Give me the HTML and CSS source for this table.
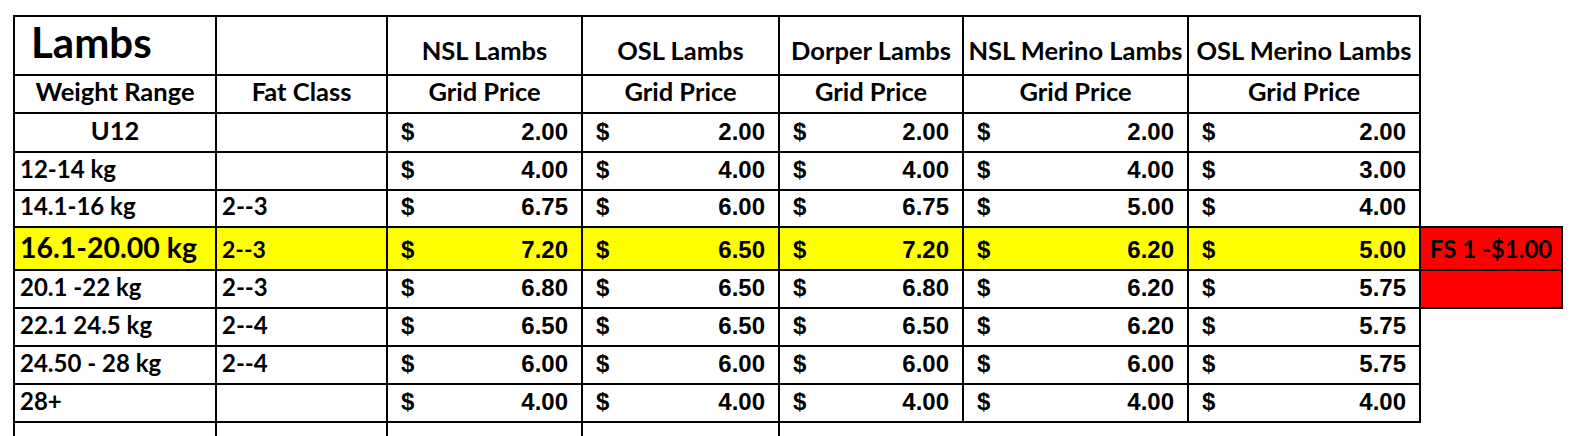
FILE: index.html
```html
<!DOCTYPE html>
<html>
<head>
<meta charset="utf-8">
<title>Lambs Grid Price</title>
<link rel="stylesheet" href="styles.css">
</head>
<body>
<div class="sheet">
  <div class="row head">
    <div class="cell title">Lambs</div>
    <div class="cell"></div>
    <div class="cell hd">NSL Lambs</div>
    <div class="cell hd">OSL Lambs</div>
    <div class="cell hd">Dorper Lambs</div>
    <div class="cell hd">NSL Merino Lambs</div>
    <div class="cell hd">OSL Merino Lambs</div>
    <div class="void"></div>
  </div>
  <div class="row">
    <div class="cell hd">Weight Range</div>
    <div class="cell hd">Fat Class</div>
    <div class="cell hd">Grid Price</div>
    <div class="cell hd">Grid Price</div>
    <div class="cell hd">Grid Price</div>
    <div class="cell hd">Grid Price</div>
    <div class="cell hd">Grid Price</div>
    <div class="void"></div>
  </div>
  <div class="row">
    <div class="cell hd">U12</div>
    <div class="cell"></div>
    <div class="cell price"><span>$</span><span>2.00</span></div>
    <div class="cell price"><span>$</span><span>2.00</span></div>
    <div class="cell price"><span>$</span><span>2.00</span></div>
    <div class="cell price"><span>$</span><span>2.00</span></div>
    <div class="cell price"><span>$</span><span>2.00</span></div>
    <div class="void"></div>
  </div>
  <div class="row">
    <div class="cell">12-14 kg</div>
    <div class="cell"></div>
    <div class="cell price"><span>$</span><span>4.00</span></div>
    <div class="cell price"><span>$</span><span>4.00</span></div>
    <div class="cell price"><span>$</span><span>4.00</span></div>
    <div class="cell price"><span>$</span><span>4.00</span></div>
    <div class="cell price"><span>$</span><span>3.00</span></div>
    <div class="void"></div>
  </div>
  <div class="row">
    <div class="cell">14.1-16 kg</div>
    <div class="cell">2--3</div>
    <div class="cell price"><span>$</span><span>6.75</span></div>
    <div class="cell price"><span>$</span><span>6.00</span></div>
    <div class="cell price"><span>$</span><span>6.75</span></div>
    <div class="cell price"><span>$</span><span>5.00</span></div>
    <div class="cell price"><span>$</span><span>4.00</span></div>
    <div class="void cap"></div>
  </div>
  <div class="row hi">
    <div class="cell big">16.1-20.00 kg</div>
    <div class="cell">2--3</div>
    <div class="cell price"><span>$</span><span>7.20</span></div>
    <div class="cell price"><span>$</span><span>6.50</span></div>
    <div class="cell price"><span>$</span><span>7.20</span></div>
    <div class="cell price"><span>$</span><span>6.20</span></div>
    <div class="cell price"><span>$</span><span>5.00</span></div>
    <div class="cell note">FS 1 -$1.00</div>
  </div>
  <div class="row">
    <div class="cell">20.1 -22 kg</div>
    <div class="cell">2--3</div>
    <div class="cell price"><span>$</span><span>6.80</span></div>
    <div class="cell price"><span>$</span><span>6.50</span></div>
    <div class="cell price"><span>$</span><span>6.80</span></div>
    <div class="cell price"><span>$</span><span>6.20</span></div>
    <div class="cell price"><span>$</span><span>5.75</span></div>
    <div class="cell note"></div>
  </div>
  <div class="row">
    <div class="cell">22.1 24.5 kg</div>
    <div class="cell">2--4</div>
    <div class="cell price"><span>$</span><span>6.50</span></div>
    <div class="cell price"><span>$</span><span>6.50</span></div>
    <div class="cell price"><span>$</span><span>6.50</span></div>
    <div class="cell price"><span>$</span><span>6.20</span></div>
    <div class="cell price"><span>$</span><span>5.75</span></div>
    <div class="void"></div>
  </div>
  <div class="row">
    <div class="cell">24.50 - 28 kg</div>
    <div class="cell">2--4</div>
    <div class="cell price"><span>$</span><span>6.00</span></div>
    <div class="cell price"><span>$</span><span>6.00</span></div>
    <div class="cell price"><span>$</span><span>6.00</span></div>
    <div class="cell price"><span>$</span><span>6.00</span></div>
    <div class="cell price"><span>$</span><span>5.75</span></div>
    <div class="void"></div>
  </div>
  <div class="row">
    <div class="cell">28+</div>
    <div class="cell"></div>
    <div class="cell price"><span>$</span><span>4.00</span></div>
    <div class="cell price"><span>$</span><span>4.00</span></div>
    <div class="cell price"><span>$</span><span>4.00</span></div>
    <div class="cell price"><span>$</span><span>4.00</span></div>
    <div class="cell price"><span>$</span><span>4.00</span></div>
    <div class="void"></div>
  </div>
  <div class="row tail">
    <div class="cell"></div>
    <div class="cell"></div>
    <div class="cell"></div>
    <div class="cell"></div>
    <div class="void"></div>
    <div class="void"></div>
    <div class="void"></div>
    <div class="void"></div>
  </div>
</div>
</body>
</html>
```
FILE: styles.css
```css
html, body {
  overflow: hidden;
}
body {
  margin: 8px 8px 0;
  background: #fff;
  color: #000;
  font-family: "Lato", "Liberation Sans", sans-serif;
}
.sheet {
  display: grid;
  grid-template-columns: 204px 171px 195px 197px 184px 225px 232px 142px;
  grid-template-rows: 61px 38px 39px 38px 37px 43px 38px 38px 38px 38px 13px;
  margin: 7px 0 0 5px;
}
.row {
  display: contents;
}
.cell {
  box-sizing: border-box;
  border-right: 2px solid #000;
  border-bottom: 2px solid #000;
  display: flex;
  align-items: flex-end;
  padding: 0 5px 8px;
  font-size: 24px;
  font-weight: 700;
  line-height: 1;
  white-space: nowrap;
}
.row > .cell:first-child {
  border-left: 2px solid #000;
}
.head > .cell {
  border-top: 2px solid #000;
  padding-bottom: 11px;
}
.hd {
  justify-content: center;
  font-size: 25.5px;
}
.title {
  font-size: 42px;
  padding-left: 16px;
  padding-bottom: 11px;
}
.void {
  box-sizing: border-box;
}
.cap {
  border-bottom: 2px solid #000;
}
.hi > .cell {
  background: #ffff00;
}
.hi > .cell:nth-child(2) {
  font-size: 23px;
}
.hi > .big {
  font-size: 28.5px;
}
.hi > .note,
.note {
  background: #ff0000;
  justify-content: center;
}
.price {
  justify-content: space-between;
  padding: 0 13px 7px 13px;
  font-family: "Liberation Sans", Arial, sans-serif;
  font-size: 24px;
}
.tail > .cell {
  border-bottom: none;
}
```
